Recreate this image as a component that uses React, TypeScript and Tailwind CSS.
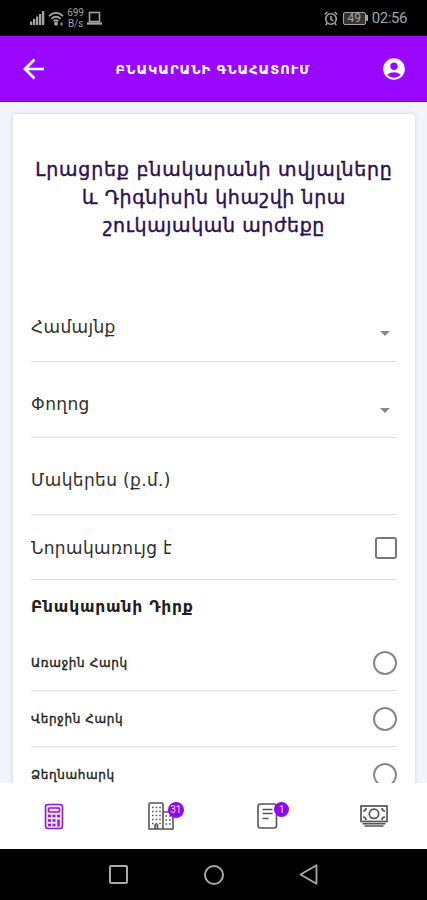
import type { ReactNode } from "react";
import { MdAccountCircle, MdArrowDropDown } from "react-icons/md";

const OPTIONS = ["Առաջին Հարկ", "Վերջին Հարկ", "Ձեղնահարկ"];

function StatusBar() {
  return (
    <div className="flex h-9 shrink-0 items-center justify-between bg-black pl-[30px] pr-[20px] text-[#a3a3a3]">
      <div className="flex items-center">
        <svg width="15" height="14" viewBox="0 0 15 14" fill="currentColor">
          <path d="M0 10.5h2.3V14H0zM3 8h2.3v6H3zM6 5.5h2.3V14H6zM9 3h2.3v11H9zM12 0h2.3v14H12z" />
        </svg>
        <svg className="ml-[3px]" width="17" height="15" viewBox="0 0 17 15" fill="none" stroke="currentColor" strokeWidth="1.9">
          <path d="M1 5q7-6.5 14 0M3.4 7.7q4.6-4 9.2 0M5.7 10.3q2.3-2 4.6 0" />
          <circle cx="8" cy="12.8" r="1" fill="currentColor" />
          <path d="M13.5 11.5v3" />
        </svg>
        <div className="ml-[2px] w-[17px] text-center font-['Roboto',sans-serif] text-[10px] leading-[11px] tracking-[-0.2px]">
          <div>699</div>
          <div>B/s</div>
        </div>
        <svg className="ml-[3px]" width="15" height="14" viewBox="0 0 15 14" fill="none" stroke="currentColor" strokeWidth="1.6">
          <rect x="2.5" y="1.5" width="10" height="9" />
          <path d="M0 12.5h15" strokeWidth="2.4" />
        </svg>
      </div>
      <div className="flex items-center">
        <svg width="14" height="15" viewBox="0 0 14 15" fill="none" stroke="currentColor" strokeWidth="1.6">
          <circle cx="7" cy="8" r="5.3" />
          <path d="M7 5v3.3l2.3 1.5M.7 3.5 3.5 1M13.3 3.5 10.5 1M3 12.5 1.7 14M11 12.5l1.3 1.5" />
        </svg>
        <div className="ml-[5px] flex h-[13px] w-[23px] items-center justify-center rounded-[2px] border border-current bg-[#333] font-['Roboto',sans-serif] text-[12px] leading-none">
          49
        </div>
        <div className="h-[6px] w-[2px] bg-current" />
        <span className="ml-[4px] font-['Roboto',sans-serif] text-[15px] leading-none tracking-[-0.4px]">02:56</span>
      </div>
    </div>
  );
}

function Field({ label, className, children }: { label: string; className: string; children?: ReactNode }) {
  return (
    <div className={`flex shrink-0 items-center justify-between border-b border-[#dedede] text-[17px] leading-none tracking-[0.35px] text-[#303030] ${className}`}>
      <span className="whitespace-nowrap">{label}</span>
      {children}
    </div>
  );
}

function NavBadge({ value, className }: { value: string; className: string }) {
  return (
    <span className={`absolute flex items-center justify-center rounded-full bg-[#9206ec] font-['Roboto',sans-serif] text-[10px] leading-none text-[#eadcf6] ${className}`}>
      {value}
    </span>
  );
}

function BottomNav() {
  return (
    <nav className="grid h-[66px] shrink-0 grid-cols-4 items-center bg-white pl-px text-[#555]">
      <div className="flex justify-center">
        <svg className="text-[#8b1fd0]" width="20" height="27" viewBox="0 0 20 27" fill="none" stroke="currentColor" strokeWidth="1.6">
          <rect x="1.5" y="1.5" width="17" height="24" rx="2.5" fill="#efe0fa" />
          <rect x="4.5" y="5" width="11" height="4" rx="1" />
          <path d="M4 13h3M8.5 13h3M13 13h3M4 17.5h3M8.5 17.5h3M4 22h3M8.5 22h3M14.5 16.5v7" strokeWidth="2.4" />
        </svg>
      </div>
      <div className="flex justify-center">
        <div className="relative">
          <svg width="26" height="28" viewBox="0 0 26 28" fill="none" stroke="currentColor" strokeWidth="1.6">
            <path d="M1 27V2q0-1 1-1h12q1 0 1 1v25zM15 10h9q1 0 1 1v16H15M7 27v-4h2.5v4" />
            <path d="M4 5.5h9M4 9.5h9M4 13.5h9M4 17.5h9M4 21.5h9M17.5 14h6M17.5 18h6M17.5 22h6" strokeDasharray="1.6 2" />
          </svg>
          <NavBadge value="31" className="top-0 left-[20px] size-4" />
        </div>
      </div>
      <div className="flex justify-center">
        <div className="relative">
          <svg width="21" height="26" viewBox="0 0 21 26" fill="none" stroke="currentColor" strokeWidth="1.6">
            <rect x="1" y="1" width="18.500" height="24" rx="2.5" />
            <path d="M5.5 6.500h10M5.5 10.5h10M5.5 15.500h6" />
          </svg>
          <NavBadge value="1" className="-top-px left-[17.5px] size-[15px]" />
        </div>
      </div>
      <div className="flex justify-center">
        <svg width="28" height="23" viewBox="0 0 28 23" fill="none" stroke="currentColor" strokeWidth="1.7">
          <rect x="1" y="1" width="26" height="15.5" />
          <circle cx="14" cy="8.8" r="4.700" />
          <path d="M3 6q3 0 3-3M25 6q-3 0-3-3M3 12q3 0 3 3M25 12q-3 0-3 3" />
          <path d="M2.5 18.800h23M4.500 21h19" strokeWidth="1.400" />
        </svg>
      </div>
    </nav>
  );
}

function SystemBar() {
  return (
    <div className="flex h-[51px] shrink-0 items-center justify-between bg-black px-[109px] text-[#aaa]">
      <div className="size-[19px] rounded-[2px] border-2 border-current" />
      <div className="size-[20px] rounded-full border-2 border-current" />
      <svg width="19" height="21" viewBox="0 0 19 21" fill="none" stroke="currentColor" strokeWidth="1.8" strokeLinejoin="round">
        <path d="M17.5 1.3v18.4L1.5 10.5z" />
      </svg>
    </div>
  );
}

export default function App() {
  return (
    <div className="flex h-[900px] w-[427px] flex-col overflow-hidden bg-[#f3f5fe] font-['DejaVu_Sans',sans-serif]">
      <StatusBar />
      <header className="flex h-[66px] shrink-0 items-center justify-between border-b border-[#7d05d8] bg-[#9a08ff] pl-[23px] pr-5 text-white">
        <svg width="22" height="22" viewBox="0 0 22 22" fill="none" stroke="currentColor" strokeWidth="2.7">
          <path d="M21 11H2.5M11.500 1.5 2 11l9.5 9.5" />
        </svg>
        <h1 className="whitespace-nowrap pt-[2px] text-[13px] font-bold tracking-[1.02px]">ԲՆԱԿԱՐԱՆԻ ԳՆԱՀԱՏՈՒՄ</h1>
        <MdAccountCircle className="size-[26px]" />
      </header>

      <main className="flex min-h-0 grow flex-col overflow-hidden pl-[13px] pr-3 pt-3">
        <div className="flex h-[760px] shrink-0 flex-col rounded-[4px] bg-white px-[18px] shadow-[0_0_4px_rgba(0,0,0,0.16)]">
          <h2 className="mt-[41px] h-[153px] shrink-0 whitespace-nowrap text-center text-[19px] leading-[28px] tracking-[0.6px] text-[#2c1055] [-webkit-text-stroke:0.4px_#2c1055]">
            <span className="tracking-[0.78px]">Լրացրեք բնակարանի տվյալները</span>
            <br />
            և Դիգնիսին կհաշվի նրա
            <br />
            շուկայական արժեքը
          </h2>
          <Field label="Համայնք" className="h-[54px] pb-[15px]">
            <MdArrowDropDown className="mt-[12px] size-6 text-[#888]" />
          </Field>
          <Field label="Փողոց" className="h-[76px] pt-[10px]">
            <MdArrowDropDown className="mt-[11px] size-6 text-[#888]" />
          </Field>
          <Field label="Մակերես (ք.մ.)" className="h-[77px] pt-[9px]" />
          <Field label="Նորակառույց է" className="h-[65px] pt-[2px]">
            <span className="size-[22px] rounded-[3px] border-2 border-[#777]" />
          </Field>
          <h3 className="flex h-[55px] shrink-0 items-center whitespace-nowrap text-[15.5px] font-bold tracking-[0.8px] text-[#202020]">Բնակարանի Դիրք</h3>
          {OPTIONS.map((option) => (
            <label key={option} className="flex h-14 shrink-0 items-center justify-between border-b border-[#dedede] text-[12px] tracking-[0.62px] text-[#222] [-webkit-text-stroke:0.4px_#222]">
              {option}
              <span className="size-6 rounded-full border-2 border-[#888]" />
            </label>
          ))}
        </div>
      </main>

      <BottomNav />
      <SystemBar />
    </div>
  );
}
